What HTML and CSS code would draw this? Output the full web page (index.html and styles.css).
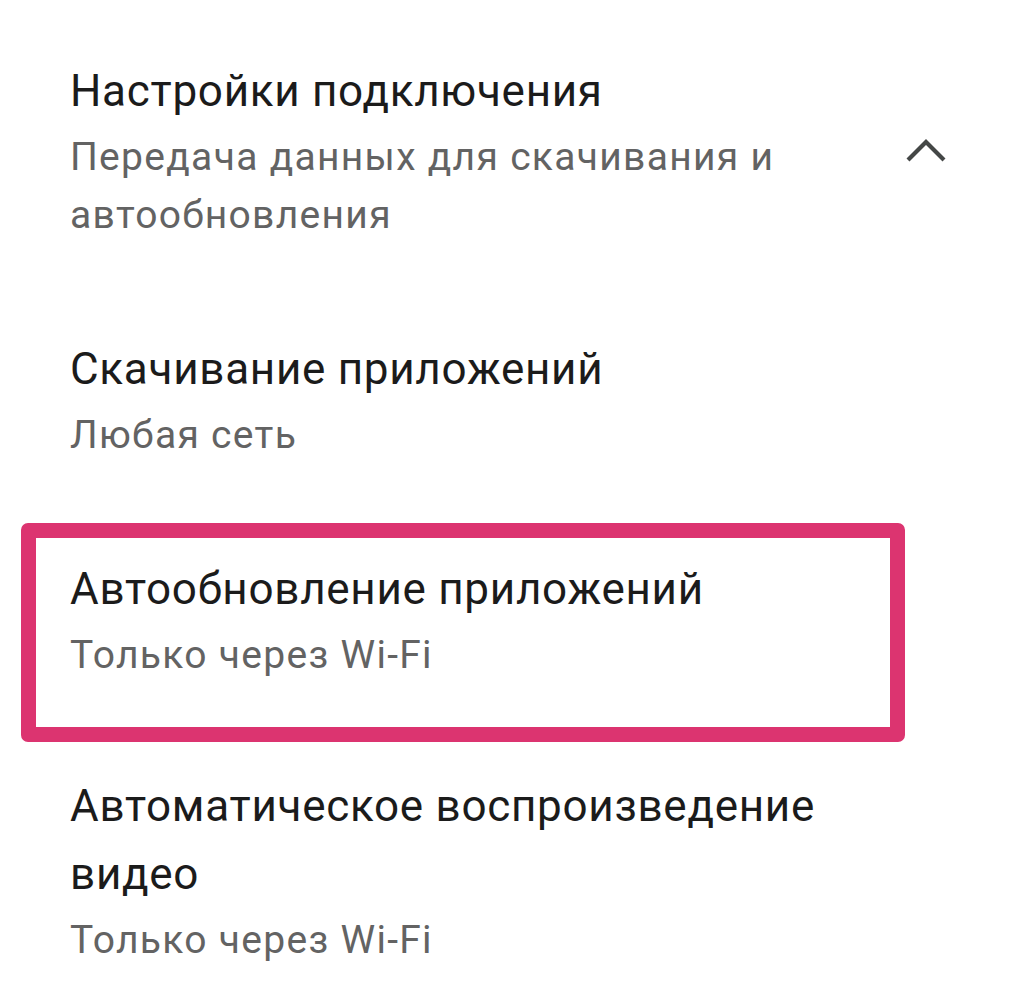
FILE: index.html
```html
<!DOCTYPE html>
<html lang="ru">
<head>
<meta charset="utf-8">
<title>Настройки подключения</title>
<link rel="stylesheet" href="styles.css">
</head>
<body>
<div class="list">
  <div class="item item-head">
    <div class="text">
      <div class="title">Настройки подключения</div>
      <div class="sub">Передача данных для скачивания и автообновления</div>
    </div>
    <svg class="chevron" width="44" height="28" viewBox="0 0 44 28" aria-hidden="true">
      <path d="M4 23 L22 5 L40 23" fill="none" stroke="#444746" stroke-width="4.2"/>
    </svg>
  </div>
  <div class="item">
    <div class="text">
      <div class="title">Скачивание приложений</div>
      <div class="sub">Любая сеть</div>
    </div>
  </div>
  <div class="item item-marked">
    <div class="text">
      <div class="title">Автообновление приложений</div>
      <div class="sub">Только через Wi-Fi</div>
    </div>
  </div>
  <div class="item item-last">
    <div class="text">
      <div class="title">Автоматическое воспроизведение видео</div>
      <div class="sub">Только через Wi-Fi</div>
    </div>
  </div>
</div>
</body>
</html>
```

FILE: styles.css
```css
html, body {
  margin: 0;
  padding: 0;
  background: #ffffff;
}

body {
  width: 1024px;
  height: 1007px;
  overflow: hidden;
  font-family: Roboto, "Noto Sans", "Liberation Sans", sans-serif;
}

.list {
  display: flex;
  flex-direction: column;
  padding-top: 11px;
}

.item {
  position: relative;
  display: flex;
  align-items: center;
  padding: 46px 90px 45px 70px;
}

.item-head {
  padding-right: 76px;
  gap: 20px;
}

.item-last {
  padding-top: 43px;
}

.text {
  flex: 1;
  display: flex;
  flex-direction: column;
  gap: 3px;
}

.title {
  font-size: 44px;
  line-height: 68px;
  color: #1b1b1b;
  letter-spacing: 0.72px;
}

.sub {
  font-size: 39px;
  line-height: 58px;
  color: #636363;
  letter-spacing: 1.3px;
}

.chevron {
  flex: none;
  display: block;
}

.item-marked::after {
  content: "";
  position: absolute;
  left: 21px;
  top: 14px;
  width: 884px;
  height: 219px;
  box-sizing: border-box;
  border: 15px solid #dc3470;
  border-radius: 7px;
  pointer-events: none;
}
```
